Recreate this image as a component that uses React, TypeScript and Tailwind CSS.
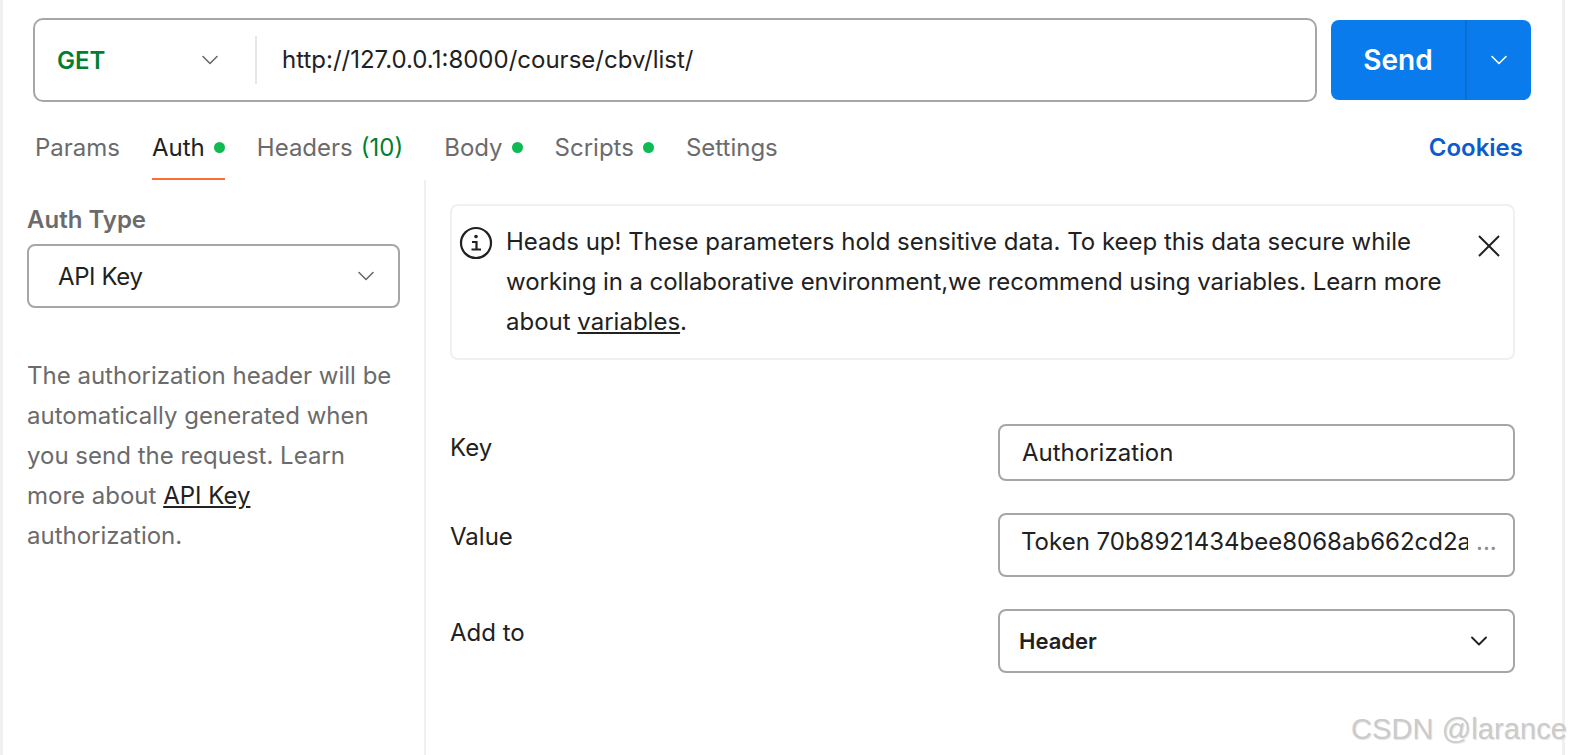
import { ChevronDown } from "lucide-react";

function Dot() {
  return <span className="ml-[9px] inline-block h-[11px] w-[11px] rounded-full bg-[#0cbb52]" />;
}

function Tab({ label, active, dot, className, children }: { label: string; active?: boolean; dot?: boolean; className?: string; children?: React.ReactNode }) {
  return (
    <div className={`flex h-full items-center border-b-2 pt-[15px] ${active ? "border-[#ff6c37] text-[#212121]" : "border-transparent text-[#6b6b6b]"} ${className ?? ""}`}>
      <span>{label}</span>
      {children}
      {dot && <Dot />}
    </div>
  );
}

function Field({ label, children, className }: { label: string; children: React.ReactNode; className?: string }) {
  return (
    <div className={`flex items-start justify-between ${className ?? ""}`}>
      <div className="mt-[4px] leading-[40px] text-[#212121]">{label}</div>
      {children}
    </div>
  );
}

export default function App() {
  return (
    <div className="relative h-[755px] w-[1571px] overflow-hidden bg-white font-['Inter',sans-serif] text-[24px] text-[#212121]">
      <div className="flex h-full w-[1565px] flex-col border-x-[3px] border-[#f0f0f0]">
        <div className="flex pl-[30px] pr-[31px] pt-[18px]">
          <div className="flex h-[84px] flex-1 items-center rounded-[10px] border-2 border-[#a6a6a6] pl-[22px]">
            <div className="flex w-[198px] items-center">
              <span className="flex-1 pt-[2px] font-semibold text-[#007f31]">GET</span>
              <ChevronDown className="mr-[31px] h-[28px] w-[28px] text-[#6b6b6b]" strokeWidth={1.4} />
            </div>
            <div className="h-[48px] w-[2px] bg-[#e6e6e6]" />
            <div className="ml-[25px]">http://127.0.0.1:8000/course/cbv/list/</div>
          </div>
          <div className="ml-[14px] mt-[2px] flex h-[80px] w-[200px] overflow-hidden rounded-[8px] bg-[#097bed] font-semibold text-white">
            <div className="flex w-[134px] items-center justify-center text-[28px]">Send</div>
            <div className="flex flex-1 items-center justify-center border-l-2 border-[#0a6fd4]">
              <ChevronDown className="h-[28px] w-[28px]" strokeWidth={1.4} />
            </div>
          </div>
        </div>
        <div className="flex h-[78px] items-center pl-[32px] pr-[39px]">
          <Tab label="Params" />
          <Tab label="Auth" active dot className="ml-[32px]" />
          <Tab label="Headers" className="ml-[32px]">
            <span className="ml-2 text-[#007f31]">(10)</span>
          </Tab>
          <Tab label="Body" dot className="ml-[41px]" />
          <Tab label="Scripts" dot className="ml-[32px]" />
          <Tab label="Settings" className="ml-[32px]" />
          <span className="ml-auto mt-[14px] font-semibold text-[#0c5bd0]">Cookies</span>
        </div>
        <div className="flex min-h-0 flex-1">
          <div className="w-[423px] shrink-0 border-r-2 border-[#f0f0f0] pl-[24px] pr-[24px] pt-[24px]">
            <div className="font-semibold leading-[32px] text-[#6b6b6b]">Auth Type</div>
            <div className="mt-[8px] flex h-[64px] w-[373px] items-center justify-between rounded-[8px] border-2 border-[#a6a6a6] pl-[29px] pr-[18px]">
              <span className="pt-[2px] tracking-[-0.4px]">API Key</span>
              <ChevronDown className="h-[28px] w-[28px] text-[#6b6b6b]" strokeWidth={1.4} />
            </div>
            <p className="mt-[48px] w-[372px] leading-[40px] text-[#6b6b6b]">
              The authorization header will be automatically generated when you send the request. Learn more about{" "}
              <span className="text-[#212121] underline">API Key</span> authorization.
            </p>
          </div>
          <div className="flex-1 pl-[24px] pr-[47px] pt-[24px]">
            <div className="relative h-[156px] rounded-[8px] border-2 border-[#f0f0f0] pb-[16px] pl-[54px] pr-[60px] pt-[16px] leading-[40px]">
              <svg className="absolute left-[7px] top-[20px] h-[34px] w-[34px]" viewBox="0 0 34 34" fill="none" stroke="#212121" strokeWidth="2.2">
                <circle cx="17" cy="17" r="15" />
                <circle cx="17" cy="10.5" r="1.8" fill="#212121" stroke="none" />
                <path d="M13 16H17.5V23.5M12.5 23.5H22" />
              </svg>
              <p>
                <span className="block">Heads up! These parameters hold sensitive data. To keep this data secure while</span>
                <span className="block tracking-[-0.08px]">working in a collaborative environment,we recommend using variables. Learn more</span>
                <span className="block">
                  about <span className="underline">variables</span>.
                </span>
              </p>
              <svg className="absolute right-[11px] top-[27px] h-[26px] w-[26px]" viewBox="0 0 26 26" fill="none" stroke="#212121" strokeWidth="2">
                <path d="M3 3L23 23M23 3L3 23" />
              </svg>
            </div>
            <Field label="Key" className="mt-[64px]">
              <div className="flex h-[57px] w-[517px] items-center rounded-[8px] border-2 border-[#a6a6a6] px-[22px]">Authorization</div>
            </Field>
            <Field label="Value" className="mt-[32px]">
              <div className="flex h-[64px] w-[517px] items-start rounded-[8px] border-2 border-[#a6a6a6] pl-[21px] pr-[12px] pt-[9px]">
                <span className="block w-[447px] overflow-hidden whitespace-nowrap">Token 70b8921434bee8068ab662cd2a5f0c3d9e</span>
                <span className="ml-[8px] text-[#8c8c8c]">...</span>
              </div>
            </Field>
            <Field label="Add to" className="mt-[32px]">
              <div className="flex h-[64px] w-[517px] items-center justify-between rounded-[8px] border-2 border-[#a6a6a6] pl-[19px] pr-[20px]">
                <span className="text-[22px] font-semibold">Header</span>
                <ChevronDown className="h-[28px] w-[28px]" strokeWidth={1.6} />
              </div>
            </Field>
          </div>
        </div>
      </div>
      <div className="absolute bottom-[4px] right-[4px] font-['Liberation_Sans',sans-serif] text-[29px] tracking-[0.1px] text-[#cbcbcb] [text-shadow:1px_1px_1px_#e4e4e4]">CSDN @larance</div>
    </div>
  );
}
